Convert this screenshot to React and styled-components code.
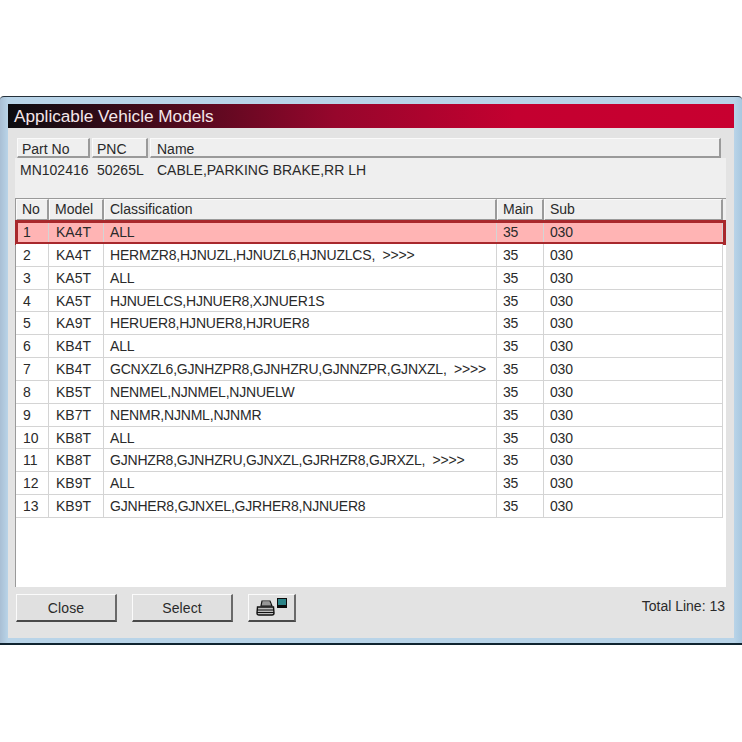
import React from "react";
import styled, { createGlobalStyle } from "styled-components";

const GlobalStyle = createGlobalStyle`
  html, body {
    margin: 0;
    padding: 0;
    background: #ffffff;
  }
  body {
    font-family: "Liberation Sans", Arial, sans-serif;
    color: #2a2a2a;
  }
`;

const rows = [
  ["1", "KA4T", "ALL"],
  ["2", "KA4T", "HERMZR8,HJNUZL,HJNUZL6,HJNUZLCS,  >>>>"],
  ["3", "KA5T", "ALL"],
  ["4", "KA5T", "HJNUELCS,HJNUER8,XJNUER1S"],
  ["5", "KA9T", "HERUER8,HJNUER8,HJRUER8"],
  ["6", "KB4T", "ALL"],
  ["7", "KB4T", "GCNXZL6,GJNHZPR8,GJNHZRU,GJNNZPR,GJNXZL,  >>>>"],
  ["8", "KB5T", "NENMEL,NJNMEL,NJNUELW"],
  ["9", "KB7T", "NENMR,NJNML,NJNMR"],
  ["10", "KB8T", "ALL"],
  ["11", "KB8T", "GJNHZR8,GJNHZRU,GJNXZL,GJRHZR8,GJRXZL,  >>>>"],
  ["12", "KB9T", "ALL"],
  ["13", "KB9T", "GJNHER8,GJNXEL,GJRHER8,NJNUER8"],
];

const PrinterIcon = () => (
  <svg width="32" height="19" viewBox="0 0 32 19">
    <rect x="21" y="0" width="10" height="10" fill="#0c0c0c" />
    <rect x="22" y="1" width="8" height="6" fill="#2c8488" />
    <path d="M6 3 L14 3 L16 8 L5 8 Z" fill="#efefef" stroke="#111" strokeWidth="1.2" />
    <path d="M6 5 H14 M5.5 7 H15" stroke="#111" strokeWidth="0.8" />
    <path d="M1.5 9 H17.5 L18 15 Q18 17 16 17 H3 Q1 17 1 15 Z" fill="#bdbdbd" stroke="#111" strokeWidth="1.4" />
    <path d="M1 12 H18 M1 14.5 H18" stroke="#111" strokeWidth="1.2" />
  </svg>
);

const App = () => {
  return (
    <Page>
      <GlobalStyle />
      <Window>
        <TitleBar>Applicable Vehicle Models</TitleBar>
        <Content>
          <PartHeader>
            <HeadCell>Part No</HeadCell>
            <HeadCell>PNC</HeadCell>
            <NameHead>Name</NameHead>
          </PartHeader>
          <PartValues>
            <PartNo>MN102416</PartNo>
            <Pnc>50265L</Pnc>
            <span>CABLE,PARKING BRAKE,RR LH</span>
          </PartValues>
          <TableBox>
            <ModelHeader>
              <ModelHeadCell>No</ModelHeadCell>
              <ModelHeadCell>Model</ModelHeadCell>
              <ModelHeadCell>Classification</ModelHeadCell>
              <ModelHeadCell>Main</ModelHeadCell>
              <ModelHeadCell>Sub</ModelHeadCell>
            </ModelHeader>
            {rows.map((row, i) => (
              <Row key={row[0]} $selected={i === 0}>
                <Cell>{row[0]}</Cell>
                <Cell>{row[1]}</Cell>
                <ClassCell>{row[2]}</ClassCell>
                <ClassCell>35</ClassCell>
                <ClassCell>030</ClassCell>
              </Row>
            ))}
          </TableBox>
          <Footer>
            <Button>Close</Button>
            <Button>Select</Button>
            <PrintButton>
              <PrinterIcon />
            </PrintButton>
            <TotalLine>Total Line: 13</TotalLine>
          </Footer>
        </Content>
      </Window>
    </Page>
  );
};

export default App;

const Page = styled.div`
  width: 742px;
  height: 742px;
  padding-top: 96px;
  box-sizing: border-box;
  overflow: hidden;
`;

const Window = styled.div`
  width: 742px;
  height: 549px;
  box-sizing: border-box;
  padding: 7px 8px 7px 8px;
  background: linear-gradient(to right, #a9bfd4 0, #b9d4e8 8px, #b9d4e8 734px, #a8c8e0 100%);
  border-top: 1px solid #25303a;
  border-bottom: 2px solid #10242f;
  border-radius: 4px 4px 0 0;
`;

const TitleBar = styled.div`
  height: 24px;
  line-height: 25px;
  padding-left: 6px;
  font-size: 17.2px;
  color: #f4e6ea;
  background: linear-gradient(to right, #0c0c10 0, #4a0a1c 22%, #96062c 45%, #c40030 70%, #c80030 100%);
`;

const Content = styled.div`
  height: 510px;
  box-sizing: border-box;
  padding-top: 10px;
  background: #e3e3e3;
`;

const PartHeader = styled.div`
  display: grid;
  grid-template-columns: 73px 56px 571px;
  column-gap: 2px;
  padding-left: 9px;
`;

const HeadCell = styled.div`
  height: 20px;
  line-height: 21px;
  box-sizing: border-box;
  padding-left: 4px;
  font-size: 14px;
  background: #efefef;
  border-top: 1px solid #fafafa;
  border-left: 1px solid #fafafa;
  border-right: 2px solid #9a9a9a;
  border-bottom: 2px solid #9a9a9a;
`;

const NameHead = styled(HeadCell)`
  padding-left: 6px;
`;

const PartValues = styled.div`
  display: flex;
  height: 40px;
  margin: 0 8px 0 7px;
  padding: 3px 0 0 5px;
  box-sizing: border-box;
  font-size: 14px;
  line-height: 18px;
  background: #efefef;
`;

const PartNo = styled.span`
  width: 77px;
`;

const Pnc = styled.span`
  width: 60px;
`;

const TableBox = styled.div`
  width: 711px;
  height: 389px;
  margin-left: 7px;
  background: #ffffff;
  border-top: 1px solid #9a9a9a;
  border-left: 1px solid #9a9a9a;
  box-sizing: border-box;
`;

const columns = "33px 55px 393px 47px 179px";

const ModelHeader = styled.div`
  display: grid;
  grid-template-columns: ${columns};
  height: 22px;
  background: #efefef;
`;

const ModelHeadCell = styled.div`
  box-sizing: border-box;
  padding-left: 5px;
  font-size: 14px;
  line-height: 19px;
  border-top: 1px solid #fafafa;
  border-left: 1px solid #fafafa;
  border-right: 2px solid #9a9a9a;
  border-bottom: 2px solid #9a9a9a;
`;

const Row = styled.div`
  display: grid;
  grid-template-columns: ${columns};
  width: 707px;
  height: 22.85px;
  box-sizing: border-box;
  position: relative;
  border-bottom: 1px solid #d4d4d4;
  background: ${(p) => (p.$selected ? "#ffb4b4" : "#ffffff")};
  ${(p) =>
    p.$selected &&
    `
    outline: 3px solid #a8282c;
    outline-offset: -2px;
    width: 709px;
  `}
`;

const Cell = styled.div`
  box-sizing: border-box;
  padding-left: 7px;
  font-size: 14px;
  line-height: 23px;
  white-space: pre;
  border-right: 1px solid #d4d4d4;
`;

const ClassCell = styled(Cell)`
  padding-left: 6px;
  letter-spacing: -0.2px;
`;

const Footer = styled.div`
  display: flex;
  align-items: flex-start;
  padding: 7px 9px 0 8px;
`;

const Button = styled.button`
  width: 101px;
  height: 28px;
  margin-right: 15px;
  padding: 0;
  box-sizing: border-box;
  font-family: "Liberation Sans", Arial, sans-serif;
  font-size: 14px;
  letter-spacing: 0.1px;
  color: #2a2a2a;
  background: #e0e0e0;
  border-top: 1px solid #fbfbfb;
  border-left: 1px solid #fbfbfb;
  border-right: 2px solid #6a6a6a;
  border-bottom: 2px solid #4a4a4a;
`;

const PrintButton = styled(Button)`
  width: 48px;
  margin-right: 0;
  display: flex;
  align-items: center;
  justify-content: center;
`;

const TotalLine = styled.div`
  margin-left: auto;
  padding-top: 4px;
  font-size: 14px;
`;
